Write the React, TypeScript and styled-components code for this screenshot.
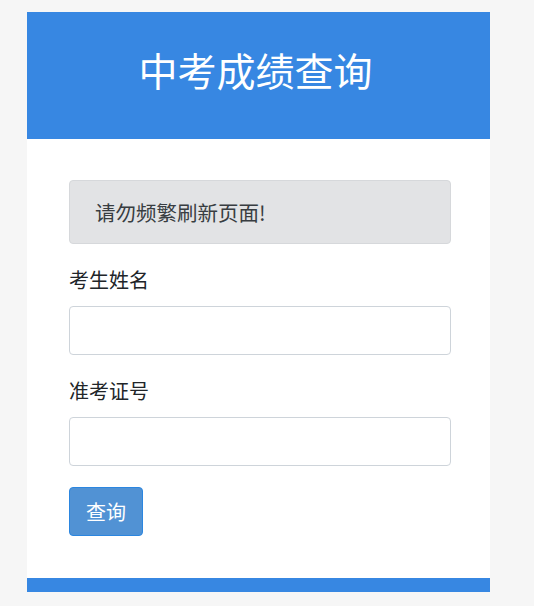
import type React from "react"
import styled, { createGlobalStyle } from "styled-components"

const GlobalStyle = createGlobalStyle`
  * {
    box-sizing: border-box;
  }
  body {
    margin: 0;
    background: #f6f6f6;
    font-family: "Noto Sans CJK SC", "Noto Sans", sans-serif;
    color: #212529;
  }
`

const Page = styled.div`
  padding: 12px 44px 13px 27px;
`

const Panel = styled.div`
  width: 463px;
  background: #ffffff;
`

const Header = styled.div`
  height: 127px;
  padding-bottom: 12px;
  background: #3787e2;
  display: flex;
  align-items: center;
  justify-content: center;
`

const Title = styled.h1`
  margin: 0 6px 0 0;
  font-size: 39px;
  font-weight: 400;
  color: #ffffff;
  line-height: 1;
`

const Body = styled.div`
  padding: 41px 39px 42px 42px;
`

const Notice = styled.div`
  height: 64px;
  margin-bottom: 1px;
  background: #e2e3e5;
  border: 1px solid #d6d8db;
  border-radius: 4px;
  padding: 16px 25px;
  font-size: 20.5px;
  line-height: 30px;
  color: #383d41;
`

const Field = styled.div`
  margin-top: 21px;
  display: flex;
  flex-direction: column;
`

const Label = styled.label`
  height: 30px;
  font-size: 20px;
  line-height: 30px;
  margin-bottom: 11px;
  color: #212529;
`

const Input = styled.input`
  height: 49px;
  width: 100%;
  border: 1px solid #ced4da;
  border-radius: 4px;
  padding: 6px 12px;
  font-size: 20px;
  font-family: inherit;
  background: #fff;
  outline: none;
`

const SubmitButton = styled.button`
  margin-top: 21px;
  height: 49px;
  padding: 0 16px;
  background: #5192d4;
  border: 1px solid #2b86e0;
  border-radius: 4px;
  color: #ffffff;
  font-size: 20px;
  font-family: inherit;
  line-height: 1;
`

const Footer = styled.div`
  height: 14px;
  background: #3787e2;
`

const App: React.FC = () => {
  return (
    <>
      <GlobalStyle />
      <Page>
        <Panel>
          <Header>
            <Title>中考成绩查询</Title>
          </Header>
          <Body>
            <Notice>请勿频繁刷新页面!</Notice>
            <Field>
              <Label>考生姓名</Label>
              <Input type="text" />
            </Field>
            <Field>
              <Label>准考证号</Label>
              <Input type="text" />
            </Field>
            <SubmitButton>查询</SubmitButton>
          </Body>
          <Footer />
        </Panel>
      </Page>
    </>
  )
}

export default App
